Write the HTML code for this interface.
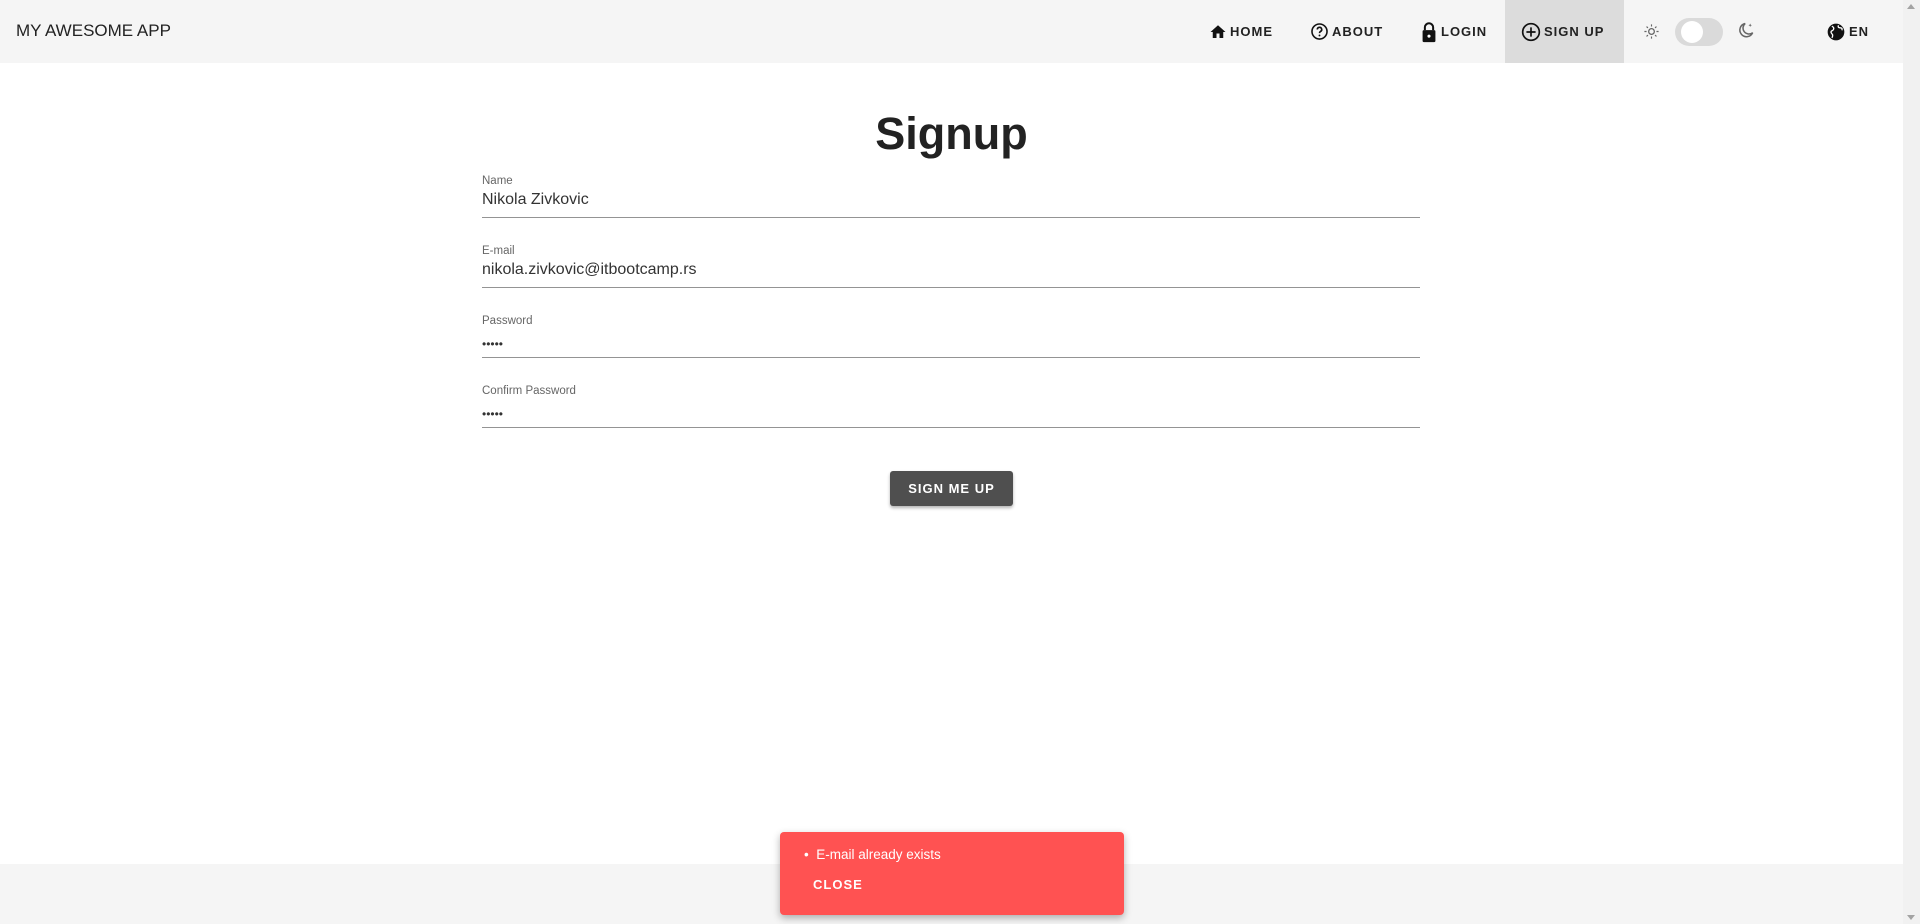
<!DOCTYPE html>
<html><head><meta charset="utf-8"><style>
*{box-sizing:border-box;margin:0;padding:0}
body{width:1920px;height:924px;overflow:hidden;font-family:"Liberation Sans",sans-serif;background:#fff;position:relative;color:#222}
.hdr{position:absolute;left:0;top:0;width:1903px;height:63px;background:#f5f5f5}
.brand{position:absolute;left:16px;top:21px;font-size:17px;color:#222}
.nav{position:absolute;top:0;height:63px;display:flex;align-items:center;font-size:13px;font-weight:bold;letter-spacing:1px;color:#222}
.nav svg{margin-right:3px}
.sb{position:absolute;right:0;top:0;width:17px;height:924px;background:#f1f1f1}
.foot{position:absolute;left:0;top:864px;width:1903px;height:60px;background:#f5f5f5}
h1{position:absolute;left:0;width:1903px;text-align:center;top:108px;font-size:45px;font-weight:bold;color:#222}
.f{position:absolute;left:482px;width:938px;border-bottom:1px solid #949494}
.lab{font-size:11.5px;color:#666}
.val{font-size:16px;color:#333;margin-top:4px;height:26px}
.btn{position:absolute;left:890px;top:471px;width:123px;height:35px;background:#4f4f4f;color:#fff;font-weight:bold;font-size:13px;letter-spacing:1px;text-align:center;line-height:35px;border-radius:3px;box-shadow:0 2px 3px rgba(0,0,0,.3)}
.snk{position:absolute;left:780px;top:832px;width:344px;height:83px;background:#ff5252;border-radius:4px;box-shadow:0 3px 8px rgba(0,0,0,.3);color:#fff}
</style></head><body>
<div class="hdr">
<div class="brand">MY AWESOME APP</div>
<div style="position:absolute;left:1505px;top:0;width:119px;height:63px;background:#dcdcdc"></div>
<div class="nav" style="left:1209px"><svg width="18" height="18" viewBox="0 0 24 24"><path d="M10 20v-6h4v6h5v-8h3L12 3 2 12h3v8z" fill="#111"/></svg>HOME</div>
<div class="nav" style="left:1310px"><svg width="19" height="19" viewBox="0 0 24 24"><circle cx="12" cy="12" r="9.5" fill="none" stroke="#111" stroke-width="2"/><path d="M9.2 9.5a2.8 2.8 0 1 1 4 2.5c-.9.5-1.2 1-1.2 2" fill="none" stroke="#111" stroke-width="2"/><circle cx="12" cy="17" r="1.2" fill="#111"/></svg>ABOUT</div>
<div class="nav" style="left:1420px"><svg width="18" height="22" viewBox="0 0 18 24"><path d="M4.5 10V7a4.5 4.5 0 0 1 9 0v3" fill="none" stroke="#111" stroke-width="2.2"/><rect x="2" y="10" width="14" height="13" rx="1.5" fill="#111"/><circle cx="9" cy="16.5" r="1.7" fill="#fff"/></svg>LOGIN</div>
<div class="nav" style="left:1521px"><svg width="20" height="20" viewBox="0 0 24 24"><circle cx="12" cy="12" r="10" fill="none" stroke="#111" stroke-width="2"/><path d="M12 6.5v11M6.5 12h11" stroke="#111" stroke-width="2"/></svg>SIGN UP</div>
<svg style="position:absolute;left:1643px;top:23px" width="17" height="17" viewBox="0 0 24 24"><circle cx="12" cy="12" r="4" fill="none" stroke="#666" stroke-width="1.8"/><path d="M12 2v3M12 19v3M2 12h3M19 12h3M5 5l2 2M17 17l2 2M5 19l2-2M17 7l2-2" stroke="#666" stroke-width="1.6"/></svg>
<div style="position:absolute;left:1675px;top:18px;width:48px;height:28px;border-radius:14px;background:#dadada"></div>
<div style="position:absolute;left:1681px;top:21px;width:22px;height:22px;border-radius:11px;background:#fff"></div>
<svg style="position:absolute;left:1736px;top:21px" width="20" height="20" viewBox="0 0 24 24"><path d="M11 3a8 8 0 1 0 9 11A7 7 0 0 1 11 3z" fill="none" stroke="#666" stroke-width="1.8"/><path d="M17 3l.6 1.5 1.5.6-1.5.6L17 7.2l-.6-1.5-1.5-.6 1.5-.6z" fill="#666"/></svg>
<div class="nav" style="left:1826px"><svg width="20" height="20" viewBox="0 0 24 24"><circle cx="12" cy="12" r="10" fill="#111"/><path d="M7 5c2 1 3 2 2 4s-3 1-3 3 2 2 2 4-1 3-1 3M15 4c-1 2 0 3 2 3s3 1 2 3" stroke="#fff" stroke-width="1.6" fill="none"/></svg>EN</div>
</div>
<h1>Signup</h1>
<div class="f" style="top:175px"><div class="lab">Name</div><div class="val">Nikola Zivkovic</div></div>
<div class="f" style="top:245px"><div class="lab">E-mail</div><div class="val">nikola.zivkovic@itbootcamp.rs</div></div>
<div class="f" style="top:315px"><div class="lab">Password</div><div class="val" style="font-size:12px;line-height:26px">&bull;&bull;&bull;&bull;&bull;</div></div>
<div class="f" style="top:385px"><div class="lab">Confirm Password</div><div class="val" style="font-size:12px;line-height:26px">&bull;&bull;&bull;&bull;&bull;</div></div>
<div class="btn">SIGN ME UP</div>
<div class="foot"></div>
<div class="snk">
<div style="position:absolute;left:24px;top:15px;font-size:13.5px">&bull;&nbsp;&nbsp;E-mail already exists</div>
<div style="position:absolute;left:33px;top:45px;font-size:13px;font-weight:bold;letter-spacing:1px">CLOSE</div>
</div>
<div class="sb"><div style="position:absolute;left:4px;top:4px;border:4px solid transparent;border-bottom:5px solid #a3a3a3;border-top:0"></div><div style="position:absolute;left:4px;bottom:4px;border:4px solid transparent;border-top:5px solid #a3a3a3;border-bottom:0"></div></div>
</body></html>
